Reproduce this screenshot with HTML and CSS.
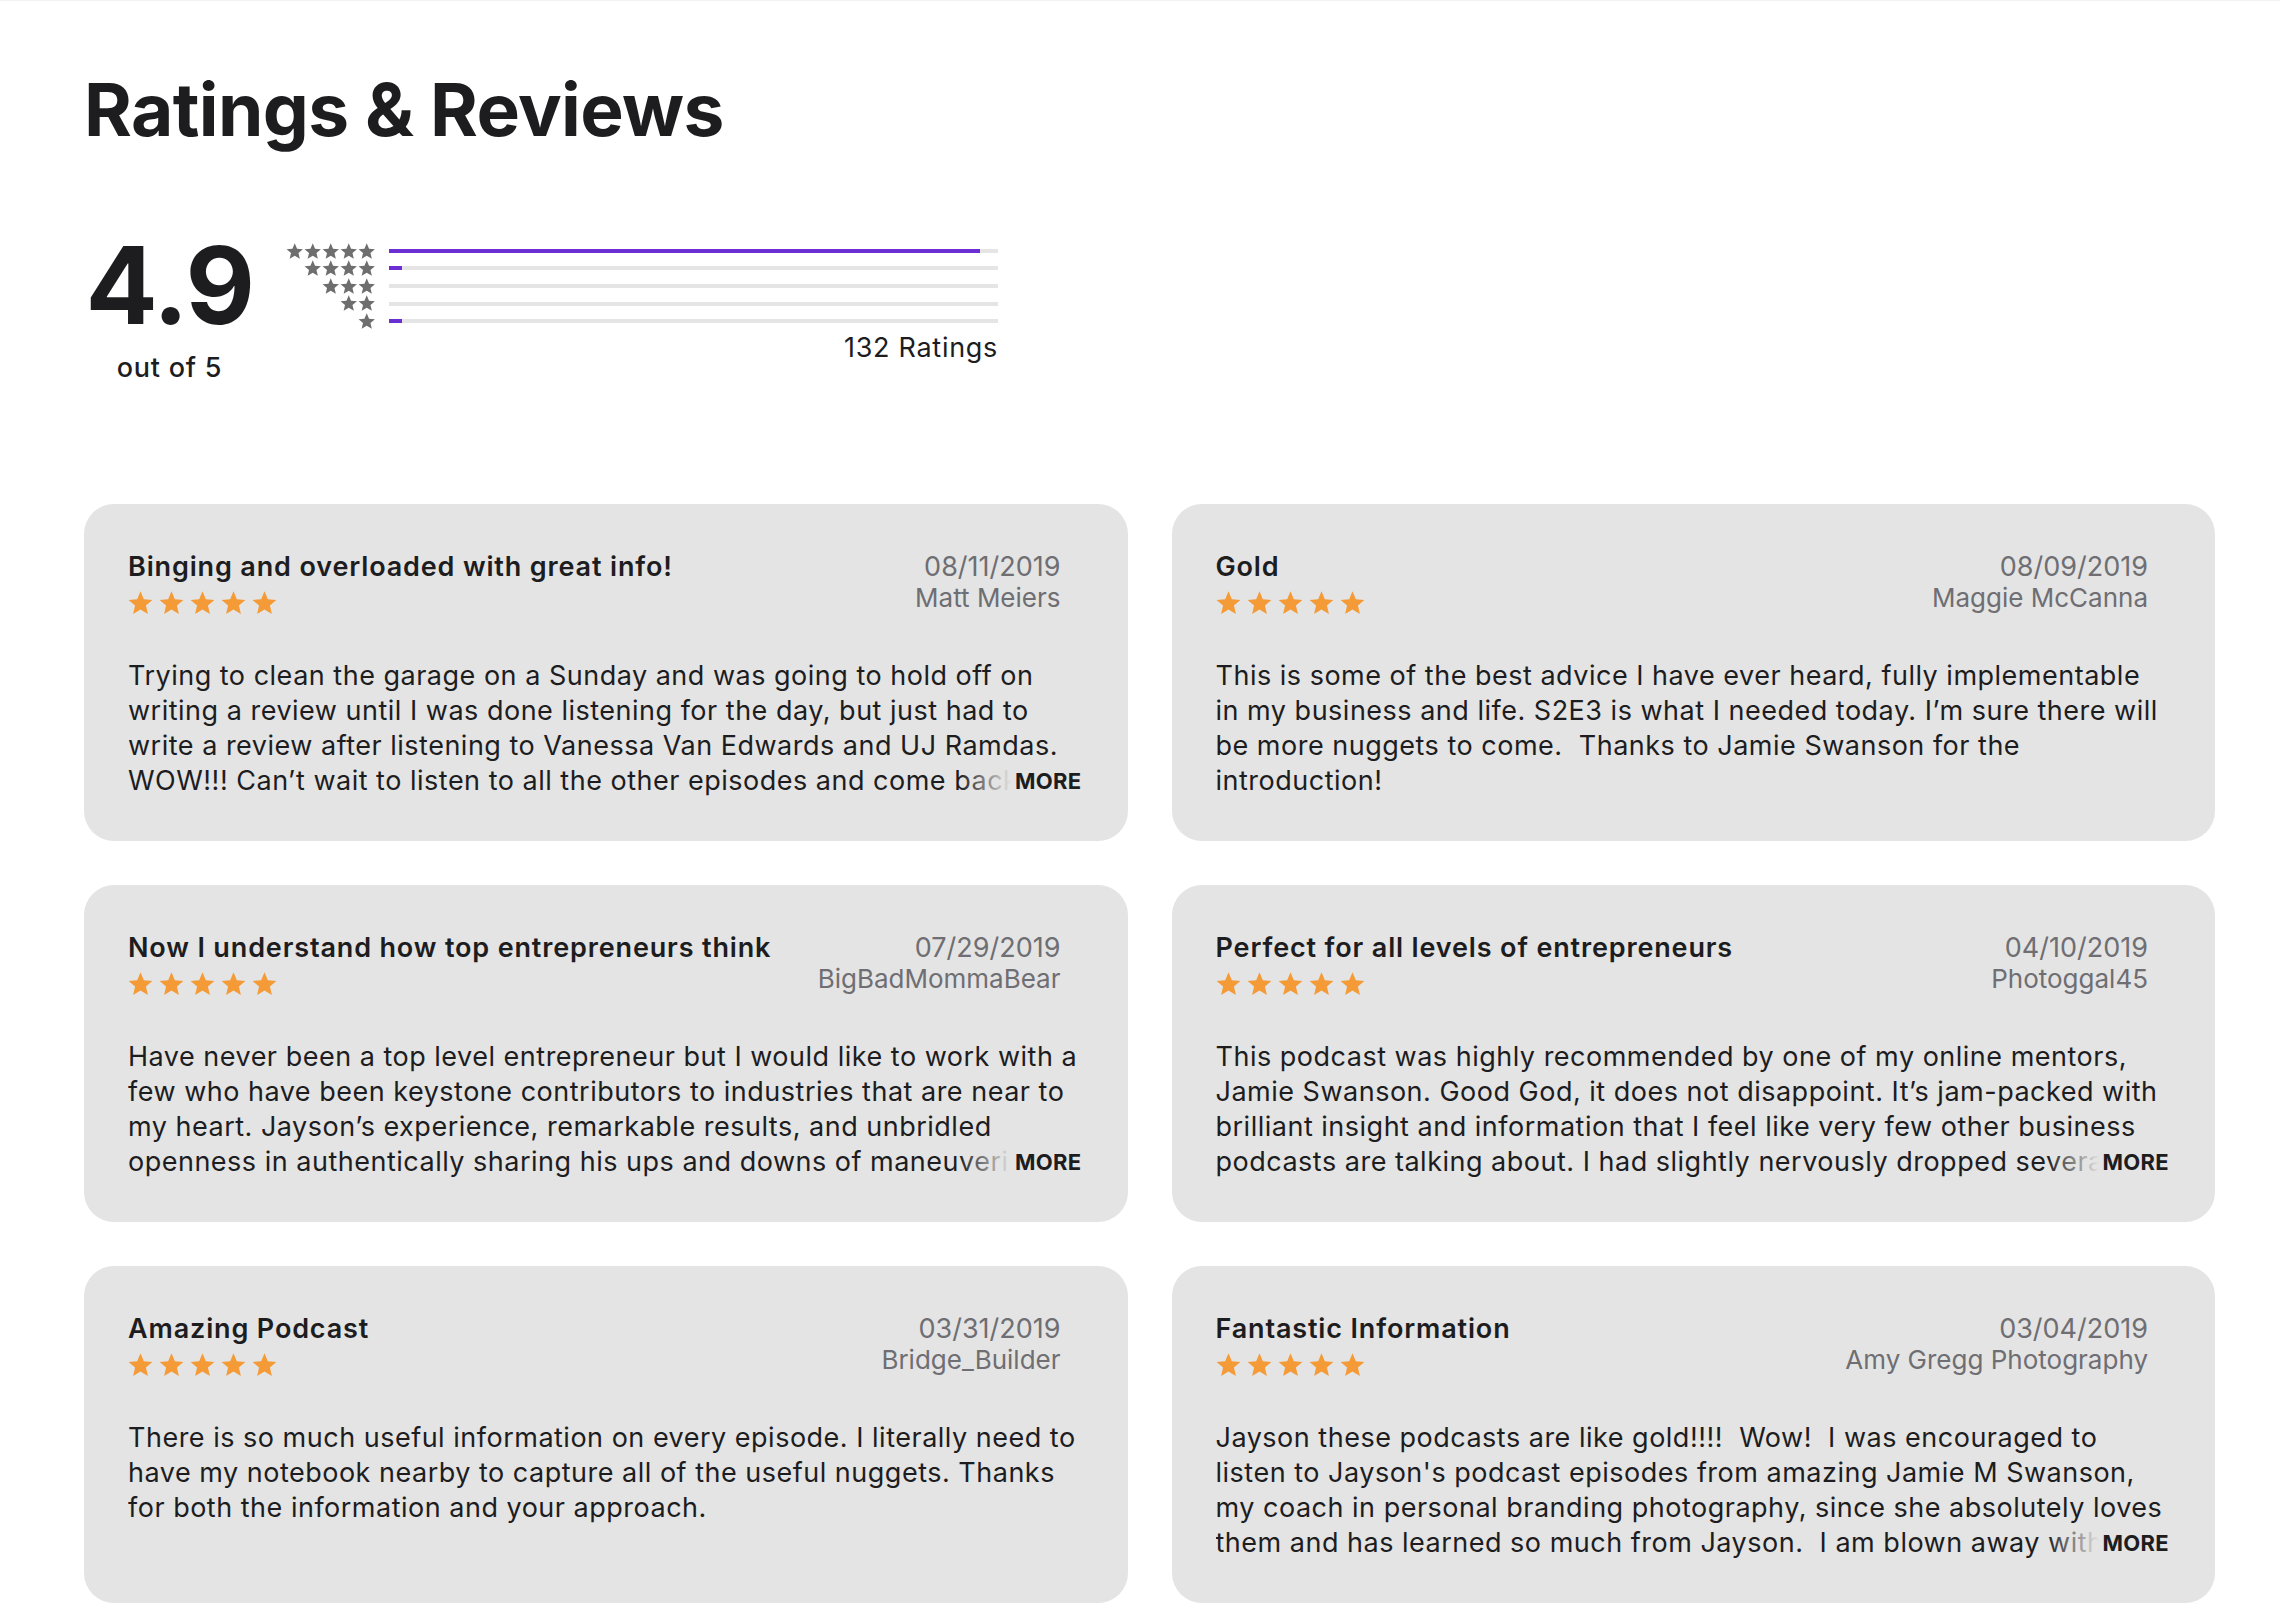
FILE: index.html
```html
<!DOCTYPE html>
<html lang="en">
<head>
<meta charset="utf-8">
<title>Ratings &amp; Reviews</title>
<link rel="stylesheet" href="styles.css">
</head>
<body>
<svg class="defs" width="0" height="0" aria-hidden="true">
  <symbol id="star" viewBox="0 0 24 23">
    <polygon points="12,0.3 15.2,7.9 23.4,8.6 17.2,14 19.1,22.1 12,17.8 4.9,22.1 6.8,14 0.6,8.6 8.8,7.9"/>
  </symbol>
</svg>
<main class="page">
  <h1 class="heading">Ratings &amp; Reviews</h1>

  <section class="summary">
    <div class="score">
      <div class="score-num">4.9</div>
      <div class="score-out">out of 5</div>
    </div>
    <div class="hist">
      <div class="hist-rows">
        <div class="hist-stars"><svg class="hs"><use href="#star"/></svg><svg class="hs"><use href="#star"/></svg><svg class="hs"><use href="#star"/></svg><svg class="hs"><use href="#star"/></svg><svg class="hs"><use href="#star"/></svg></div>
        <div class="hist-bar"><div class="hist-fill" style="width:97%"></div></div>
        <div class="hist-stars"><svg class="hs"><use href="#star"/></svg><svg class="hs"><use href="#star"/></svg><svg class="hs"><use href="#star"/></svg><svg class="hs"><use href="#star"/></svg></div>
        <div class="hist-bar"><div class="hist-fill" style="width:13px"></div></div>
        <div class="hist-stars"><svg class="hs"><use href="#star"/></svg><svg class="hs"><use href="#star"/></svg><svg class="hs"><use href="#star"/></svg></div>
        <div class="hist-bar"></div>
        <div class="hist-stars"><svg class="hs"><use href="#star"/></svg><svg class="hs"><use href="#star"/></svg></div>
        <div class="hist-bar"></div>
        <div class="hist-stars"><svg class="hs"><use href="#star"/></svg></div>
        <div class="hist-bar"><div class="hist-fill" style="width:13px"></div></div>
      </div>
      <div class="hist-total">132 Ratings</div>
    </div>
  </section>

  <section class="reviews">
    <article class="card">
      <header class="card-head">
        <div class="card-left">
          <h3 class="card-title">Binging and overloaded with great info!</h3>
          <div class="stars"><svg class="cs"><use href="#star"/></svg><svg class="cs"><use href="#star"/></svg><svg class="cs"><use href="#star"/></svg><svg class="cs"><use href="#star"/></svg><svg class="cs"><use href="#star"/></svg></div>
        </div>
        <div class="card-meta">
          <time class="card-date">08/11/2019</time>
          <div class="card-author">Matt Meiers</div>
        </div>
      </header>
      <div class="card-body">
        <p class="card-text">Trying to clean the garage on a Sunday and was going to hold off on writing a review until I was done listening for the day, but just had to write a review after listening to Vanessa Van Edwards and UJ Ramdas. WOW!!! Can’t wait to listen to all the other episodes and come back for more! This show is amazing and I will keep listening.</p>
        <button class="more">MORE</button>
      </div>
    </article>

    <article class="card">
      <header class="card-head">
        <div class="card-left">
          <h3 class="card-title">Gold</h3>
          <div class="stars"><svg class="cs"><use href="#star"/></svg><svg class="cs"><use href="#star"/></svg><svg class="cs"><use href="#star"/></svg><svg class="cs"><use href="#star"/></svg><svg class="cs"><use href="#star"/></svg></div>
        </div>
        <div class="card-meta">
          <time class="card-date">08/09/2019</time>
          <div class="card-author">Maggie McCanna</div>
        </div>
      </header>
      <div class="card-body">
        <p class="card-text">This is some of the best advice I have ever heard, fully implementable in my business and life. S2E3 is what I needed today. I’m sure there will be more nuggets to come.&nbsp; Thanks to Jamie Swanson for the introduction!</p>
      </div>
    </article>

    <article class="card">
      <header class="card-head">
        <div class="card-left">
          <h3 class="card-title">Now I understand how top entrepreneurs think</h3>
          <div class="stars"><svg class="cs"><use href="#star"/></svg><svg class="cs"><use href="#star"/></svg><svg class="cs"><use href="#star"/></svg><svg class="cs"><use href="#star"/></svg><svg class="cs"><use href="#star"/></svg></div>
        </div>
        <div class="card-meta">
          <time class="card-date">07/29/2019</time>
          <div class="card-author">BigBadMommaBear</div>
        </div>
      </header>
      <div class="card-body">
        <p class="card-text">Have never been a top level entrepreneur but I would like to work with a few who have been keystone contributors to industries that are near to my heart. Jayson’s experience, remarkable results, and unbridled openness in authentically sharing his ups and downs of maneuvering through business and life are inspiring.</p>
        <button class="more">MORE</button>
      </div>
    </article>

    <article class="card">
      <header class="card-head">
        <div class="card-left">
          <h3 class="card-title">Perfect for all levels of entrepreneurs</h3>
          <div class="stars"><svg class="cs"><use href="#star"/></svg><svg class="cs"><use href="#star"/></svg><svg class="cs"><use href="#star"/></svg><svg class="cs"><use href="#star"/></svg><svg class="cs"><use href="#star"/></svg></div>
        </div>
        <div class="card-meta">
          <time class="card-date">04/10/2019</time>
          <div class="card-author">Photoggal45</div>
        </div>
      </header>
      <div class="card-body">
        <p class="card-text">This podcast was highly recommended by one of my online mentors, Jamie Swanson. Good God, it does not disappoint. It’s jam-packed with brilliant insight and information that I feel like very few other business podcasts are talking about. I had slightly nervously dropped several episodes into my queue and I am so glad I did.</p>
        <button class="more">MORE</button>
      </div>
    </article>

    <article class="card">
      <header class="card-head">
        <div class="card-left">
          <h3 class="card-title">Amazing Podcast</h3>
          <div class="stars"><svg class="cs"><use href="#star"/></svg><svg class="cs"><use href="#star"/></svg><svg class="cs"><use href="#star"/></svg><svg class="cs"><use href="#star"/></svg><svg class="cs"><use href="#star"/></svg></div>
        </div>
        <div class="card-meta">
          <time class="card-date">03/31/2019</time>
          <div class="card-author">Bridge_Builder</div>
        </div>
      </header>
      <div class="card-body">
        <p class="card-text">There is so much useful information on every episode. I literally need to have my notebook nearby to capture all of the useful nuggets. Thanks for both the information and your approach.</p>
      </div>
    </article>

    <article class="card">
      <header class="card-head">
        <div class="card-left">
          <h3 class="card-title">Fantastic Information</h3>
          <div class="stars"><svg class="cs"><use href="#star"/></svg><svg class="cs"><use href="#star"/></svg><svg class="cs"><use href="#star"/></svg><svg class="cs"><use href="#star"/></svg><svg class="cs"><use href="#star"/></svg></div>
        </div>
        <div class="card-meta">
          <time class="card-date">03/04/2019</time>
          <div class="card-author">Amy Gregg Photography</div>
        </div>
      </header>
      <div class="card-body">
        <p class="card-text">Jayson these podcasts are like gold!!!!&nbsp; Wow!&nbsp; I was encouraged to listen to Jayson's podcast episodes from amazing Jamie M Swanson, my coach in personal branding photography, since she absolutely loves them and has learned so much from Jayson.&nbsp; I am blown away with the value in every single episode.</p>
        <button class="more">MORE</button>
      </div>
    </article>
  </section>
</main>
</body>
</html>
```

FILE: styles.css
```css
* { box-sizing: border-box; }

html, body {
  margin: 0;
  background: #ffffff;
}

body {
  font-family: Inter, "Noto Sans", "Liberation Sans", sans-serif;
  color: #1d1d1f;
  border-top: 1px solid #f2f2f2;
}

.defs { position: absolute; width: 0; height: 0; overflow: hidden; }

.page {
  padding: 0 65px 0 84px;
}

.heading {
  margin: 65px 0 0 0;
  font-size: 73px;
  line-height: 88px;
  font-weight: 700;
  letter-spacing: -0.65px;
}

.summary {
  display: flex;
  align-items: flex-start;
  margin-top: 78px;
}

.score {
  width: 171px;
  display: flex;
  flex-direction: column;
  align-items: center;
}

.score-num {
  font-size: 107px;
  line-height: 107px;
  font-weight: 700;
  letter-spacing: -1.5px;
}

.score-out {
  margin-top: 14px;
  font-size: 27px;
  line-height: 30px;
  font-weight: 500;
  letter-spacing: 0.75px;
}

.hist {
  margin-left: 30px;
  margin-top: 10px;
  display: flex;
  flex-direction: column;
}

.hist-rows {
  display: grid;
  grid-template-columns: 90px 609px;
  grid-auto-rows: 17.6px;
  column-gap: 14px;
  align-items: center;
}

.hist-stars {
  display: flex;
  justify-content: flex-end;
  gap: 0.5px;
}

.hs {
  width: 17.5px;
  height: 16.5px;
  fill: #6e6e6e;
}

.hist-bar {
  height: 4px;
  background: #e5e5e5;
}

.hist-fill {
  height: 100%;
  background: #6a2ed2;
}

.hist-total {
  align-self: flex-end;
  margin-top: 3px;
  font-size: 27px;
  line-height: 30px;
  font-weight: 400;
  letter-spacing: 0.7px;
}

.reviews {
  margin-top: 121px;
  display: grid;
  grid-template-columns: 1fr 1fr;
  grid-auto-rows: 337px;
  column-gap: 44px;
  row-gap: 44px;
}

.card {
  background: #e4e4e4;
  border-radius: 30px;
  padding: 48px 46px 0 44px;
}

.card-head {
  display: flex;
  justify-content: space-between;
  align-items: flex-start;
  padding-right: 21px;
}

.card-title {
  margin: 0;
  font-size: 27px;
  line-height: 30px;
  font-weight: 600;
  letter-spacing: 0.85px;
}

.stars {
  display: flex;
  gap: 6px;
  margin-top: 9px;
}

.cs {
  width: 25px;
  height: 24px;
  fill: #f49a36;
}

.card-meta {
  display: flex;
  flex-direction: column;
  align-items: flex-end;
  color: #6e6e73;
  font-size: 27px;
  line-height: 30px;
}

.card-author {
  margin-top: 1px;
  font-size: 26px;
}

.card-body {
  position: relative;
  margin-top: 43px;
}

.card-text {
  margin: 0;
  font-size: 27px;
  line-height: 35px;
  letter-spacing: 0.5px;
  max-height: 140px;
  overflow: hidden;
}

.more {
  position: absolute;
  right: 0;
  bottom: 0;
  border: 0;
  margin: 0;
  padding: 0 0 0 56px;
  height: 35px;
  font-family: inherit;
  font-size: 22px;
  font-weight: 700;
  letter-spacing: 0.3px;
  color: #1d1d1f;
  background: linear-gradient(to right, rgba(228,228,228,0) 0, #e4e4e4 52px);
  cursor: pointer;
}
```
